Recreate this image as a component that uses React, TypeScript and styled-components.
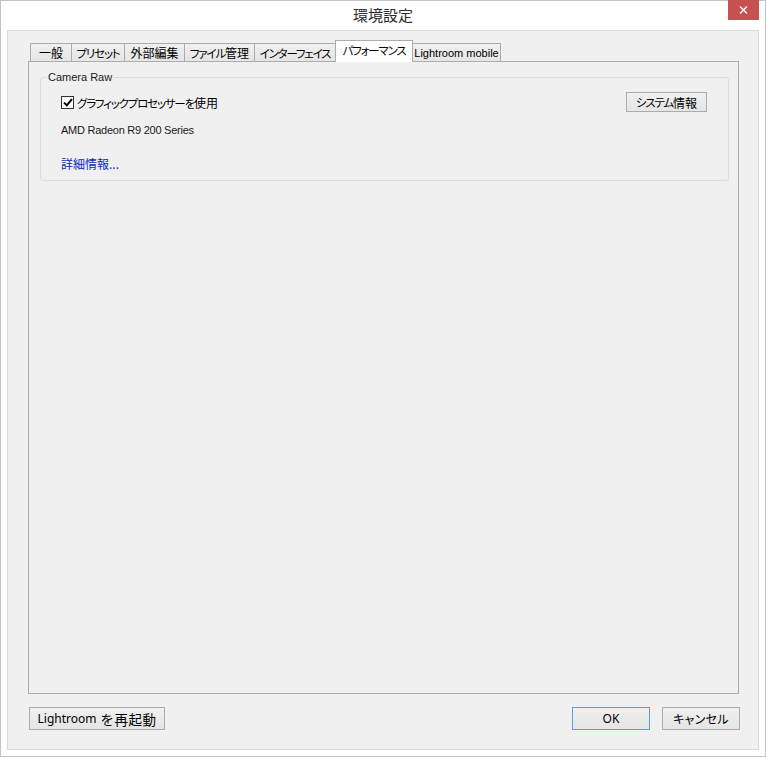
import React from "react";
import styled, { createGlobalStyle } from "styled-components";

const UI = `"Noto Sans CJK JP", "Noto Sans", sans-serif`;
const LATIN = `"Liberation Sans", "Noto Sans CJK JP", sans-serif`;

const GlobalStyle = createGlobalStyle`
  html, body { margin: 0; padding: 0; background: #ffffff; }
  body { font-family: ${UI}; }
  * { box-sizing: border-box; }
`;

const Window = styled.div`
  width: 766px;
  height: 757px;
  border: 1px solid #c4c4c4;
  background: #ffffff;
  display: flex;
  flex-direction: column;
`;

const TitleBar = styled.div`
  height: 29px;
  flex: none;
  display: grid;
  grid-template-columns: 1fr auto 1fr;
  align-items: center;
`;

const Title = styled.div`
  grid-column: 2;
  font-family: ${UI};
  font-size: 15px;
  color: #2b2b2b;
  line-height: 20px;
  padding-bottom: 1px;
`;

const CloseButton = styled.button`
  grid-column: 3;
  justify-self: end;
  align-self: start;
  width: 31px;
  height: 20px;
  margin: -1px 6px 0 0;
  padding: 0;
  border: none;
  background: #c75050;
  display: flex;
  align-items: center;
  justify-content: center;
`;

const Client = styled.div`
  flex: 1;
  margin: 0 6px 6px 6px;
  border: 1px solid #dadada;
  background: #f0f0f0;
  padding: 9px 19px 19px 20px;
  display: flex;
  flex-direction: column;
  min-height: 0;
`;

const TabStrip = styled.div`
  height: 21px;
  flex: none;
  display: flex;
  align-items: flex-end;
  padding-left: 2px;
`;

const Tab = styled.div<{ $w: number; $active?: boolean }>`
  width: ${(p) => p.$w}px;
  height: ${(p) => (p.$active ? 22 : 18)}px;
  margin-bottom: ${(p) => (p.$active ? -1 : 0)}px;
  margin-left: -1px;
  &:first-child { margin-left: 0; }
  position: relative;
  z-index: ${(p) => (p.$active ? 1 : 0)};
  border: 1px solid #acacac;
  border-bottom: none;
  background: ${(p) =>
    p.$active ? "#ffffff" : "linear-gradient(#f0f0f0, #e5e5e5)"};
  display: flex;
  align-items: center;
  justify-content: center;
  padding-bottom: ${(p) => (p.$active ? 3 : 0)}px;
  font-family: ${UI};
  font-size: 12px;
  color: #000;
  white-space: nowrap;
`;

const Kana = styled.span`
  font-size: 11.5px;
  font-feature-settings: "palt";
  letter-spacing: -1.2px;
`;

const TabLatin = styled.span`
  font-family: ${LATIN};
  font-size: 11px;
`;

const Panel = styled.div`
  flex: 1;
  min-height: 0;
  border: 1px solid #acacac;
  background: #f0f0f0;
  display: flex;
  flex-direction: column;
`;

const Group = styled.fieldset`
  margin: 8px 9px 0 11px;
  padding: 0 6px;
  min-width: 0;
  border: 1px solid #dcdcdc;
  border-radius: 3px;
`;

const Legend = styled.legend`
  padding: 0 1px;
  font-family: ${LATIN};
  font-size: 11px;
  line-height: 14px;
  color: #1a1a1a;
`;

const GroupBody = styled.div`
  padding: 8px 15px 9px 14px;
  display: flex;
  flex-direction: column;
`;

const Row = styled.div`
  height: 20px;
  display: flex;
  align-items: center;
  justify-content: space-between;
`;

const CheckLabel = styled.label`
  display: flex;
  align-items: center;
  gap: 3px;
  font-family: ${UI};
  font-size: 12px;
  color: #000;
`;

const CheckBox = styled.span`
  width: 13px;
  height: 13px;
  border: 1px solid #333333;
  background: #ffffff;
  display: flex;
  align-items: center;
  justify-content: center;
`;

const Button = styled.button<{ $w: number; $default?: boolean }>`
  width: ${(p) => p.$w}px;
  height: 100%;
  padding: 0;
  border: 1px solid ${(p) => (p.$default ? "#569de5" : "#acacac")};
  background: linear-gradient(#f0f0f0, #e5e5e5);
  font-family: ${UI};
  font-size: 12px;
  color: #000;
  display: flex;
  align-items: center;
  justify-content: center;
  white-space: nowrap;
`;

const CancelText = styled.span`
  font-size: 12px;
  font-feature-settings: "palt";
  letter-spacing: 0.3px;
`;

const BigCjk = styled.span`
  font-size: 13.5px;
  letter-spacing: 0.5px;
`;

const InfoText = styled.div`
  margin-top: 11px;
  font-family: ${LATIN};
  font-size: 11px;
  letter-spacing: -0.25px;
  line-height: 14px;
  color: #1a1a1a;
`;

const Link = styled.a`
  margin-top: 20px;
  font-family: ${UI};
  font-size: 12px;
  line-height: 14px;
  color: #0a2ab8;
  text-decoration: none;
  align-self: flex-start;
`;

const ButtonRow = styled.div`
  margin-top: 13px;
  height: 23px;
  flex: none;
  display: flex;
  align-items: stretch;
  gap: 12px;
  padding-left: 1px;
  margin-right: -1px;
`;

const Spacer = styled.div`
  flex: 1;
`;

const ButtonLatin = styled.span<{ $gap?: number }>`
  font-family: "Noto Sans", sans-serif;
  font-size: 12px;
  margin-right: ${(p) => p.$gap ?? 0}px;
`;

/* Wrap katakana/hiragana runs so they render narrow, like the Windows UI font. */
function jp(text: string) {
  const parts = text.split(/([\u3040-\u30FF]+)/);
  return parts.map((part, i) =>
    /^[\u3040-\u30FF]+$/.test(part) ? <Kana key={i}>{part}</Kana> : part
  );
}

const tabs: { label: string; w: number; latin?: boolean; active?: boolean }[] = [
  { label: "一般", w: 42 },
  { label: "プリセット", w: 54 },
  { label: "外部編集", w: 61 },
  { label: "ファイル管理", w: 71 },
  { label: "インターフェイス", w: 82 },
  { label: "パフォーマンス", w: 78, active: true },
  { label: "Lightroom mobile", w: 89, latin: true },
];

export default function App() {
  return (
    <>
      <GlobalStyle />
      <Window>
        <TitleBar>
          <Title>環境設定</Title>
          <CloseButton aria-label="閉じる">
            <svg width="9" height="8" viewBox="0 0 9 8">
              <path d="M1 0.5 L8 7.5 M8 0.5 L1 7.5" stroke="#ffffff" strokeWidth="1.4" />
            </svg>
          </CloseButton>
        </TitleBar>
        <Client>
          <TabStrip>
            {tabs.map((t) => (
              <Tab key={t.label} $w={t.w} $active={t.active}>
                {t.latin ? <TabLatin>{t.label}</TabLatin> : jp(t.label)}
              </Tab>
            ))}
          </TabStrip>
          <Panel>
            <Group>
              <Legend>Camera Raw</Legend>
              <GroupBody>
                <Row>
                  <CheckLabel>
                    <CheckBox>
                      <svg width="10" height="9" viewBox="0 0 10 9">
                        <path d="M1 4.6 L3.8 7.3 L9 1.2" fill="none" stroke="#000" strokeWidth="2" />
                      </svg>
                    </CheckBox>
                    <span>{jp("グラフィックプロセッサーを使用")}</span>
                  </CheckLabel>
                  <Button $w={81}>{jp("システム情報")}</Button>
                </Row>
                <InfoText>AMD Radeon R9 200 Series</InfoText>
                <Link href="#">詳細情報...</Link>
              </GroupBody>
            </Group>
          </Panel>
          <ButtonRow>
            <Button $w={136}>
              <ButtonLatin $gap={4}>Lightroom</ButtonLatin>
              <BigCjk>を再起動</BigCjk>
            </Button>
            <Spacer />
            <Button $w={78} $default>
              <ButtonLatin>OK</ButtonLatin>
            </Button>
            <Button $w={78}>
              <CancelText>キャンセル</CancelText>
            </Button>
          </ButtonRow>
        </Client>
      </Window>
    </>
  );
}
